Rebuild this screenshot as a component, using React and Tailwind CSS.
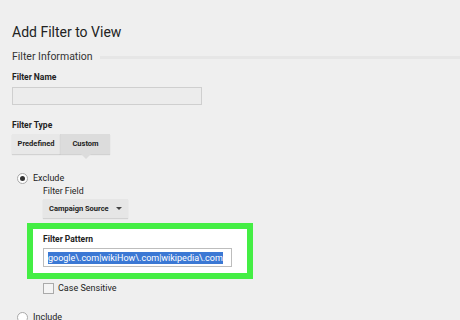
import React from "react";

const Radio = ({ checked, label }) => (
  <div className="flex h-[11px] items-center gap-[5px]">
    <span className="flex h-[11px] w-[11px] items-center justify-center rounded-full border border-[#a9a9a9] bg-white">
      {checked && <span className="h-[5px] w-[5px] rounded-full bg-[#333]" />}
    </span>
    <span className="text-[9px] leading-[11px] text-[#222]">{label}</span>
  </div>
);

export default function App() {
  return (
    <div
      className="h-[320px] w-[460px] overflow-hidden bg-[#efefef] text-[#222]"
      style={{ fontFamily: "Roboto, 'Liberation Sans', sans-serif" }}
    >
      <h1 className="pl-[12px] pt-[23px] text-[14px] leading-[18px] text-[#222]">
        Add Filter to View
      </h1>

      <div className="mt-[9px] flex h-[14px] items-center pl-[12px]">
        <span className="text-[10.5px] leading-[14px] text-[#333]">Filter Information</span>
        <div className="ml-[7px] h-[3px] flex-1 bg-[#e6e6e6]" />
      </div>

      <div className="mt-[7px] pl-[12px]">
        <p className="text-[8.5px] font-bold leading-[12px]">Filter Name</p>
        <div className="mt-[4px] h-[18px] w-[190px] border border-[#cfcfcf] bg-[#ececec]" />
      </div>

      <div className="mt-[14px] pl-[12px]">
        <p className="text-[8.5px] font-bold leading-[12px]">Filter Type</p>
        <div className="mt-[3px] flex">
          <div className="flex h-[20px] w-[48px] items-center justify-center bg-[#e8e8e8] text-[7.5px] font-bold shadow-[0_1px_1px_rgba(0,0,0,0.12)]">
            Predefined
          </div>
          <div className="relative flex h-[20px] w-[50px] items-center justify-center border-l border-[#d8d8d8] bg-[#dcdcdc] text-[7.5px] font-bold shadow-[0_1px_1px_rgba(0,0,0,0.12)]">
            Custom
            <span className="absolute left-1/2 top-[20px] -ml-[5px] h-0 w-0 border-x-[5px] border-t-[5px] border-x-transparent border-t-[#dcdcdc]" />
          </div>
        </div>
      </div>

      <div className="mt-[19px] pl-[17px]">
        <Radio checked label="Exclude" />
        <div className="pl-[26px]">
          <p className="mt-[1px] text-[8.8px] leading-[12px]">Filter Field</p>
          <div className="mt-[2px] flex h-[19px] w-[85px] items-center justify-between bg-[#e6e6e6] pl-[6px] pr-[6px] text-[7.5px] font-bold shadow-[0_1px_1px_rgba(0,0,0,0.12)]">
            <span>Campaign Source</span>
            <span className="h-0 w-0 border-x-[3px] border-t-[3px] border-x-transparent border-t-[#444]" />
          </div>
        </div>

        <div className="ml-[10px] mt-[5px] w-[226px] border-[6px] border-[#44ee44]">
          <div className="bg-white px-[10px] pb-[6px] pt-[4px]">
            <p className="text-[8.5px] font-bold leading-[12px]">Filter Pattern</p>
            <div className="mt-[3px] flex h-[19px] w-[189px] items-center border border-[#bdbdbd] bg-white pl-[4px]">
              <span className="bg-[#3b78d4] text-[9px] leading-[12px] text-white">
                google\.com|wikiHow\.com|wikipedia\.com
              </span>
            </div>
          </div>
        </div>

        <div className="ml-[26px] mt-[4px] flex h-[11px] items-center gap-[4px]">
          <span className="h-[11px] w-[11px] border border-[#aaa] bg-[#f4f4f4]" />
          <span className="text-[9px] leading-[11px] text-[#222]">Case Sensitive</span>
        </div>

        <div className="mt-[18px]">
          <Radio label="Include" />
        </div>
      </div>
    </div>
  );
}
